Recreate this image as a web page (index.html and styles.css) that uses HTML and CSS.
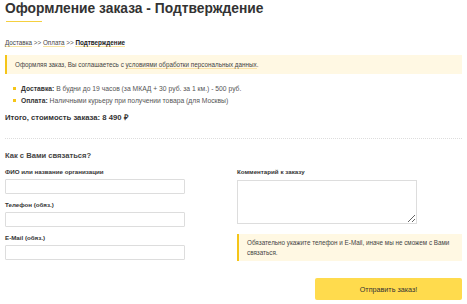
FILE: index.html
```html
<!DOCTYPE html>
<html lang="ru">
<head>
    <meta charset="UTF-8">
    <title>Оформление заказа - Подтверждение</title>
    <link rel="stylesheet" href="styles.css">
</head>
<body>

<div class="page">
    <h1 class="title">Оформление заказа - Подтверждение</h1>

    <div class="crumbs">
        <a href="#">Доставка</a> &gt;&gt; <a href="#">Оплата</a> &gt;&gt; <b>Подтверждение</b>
    </div>

    <div class="note">Оформляя заказ, Вы соглашаетесь с <span class="hl">условиями обработки персональных данных</span>.</div>

    <ul class="summary">
        <li><b>Доставка:</b> В будни до 19 часов (за МКАД + 30 руб. за 1 км.) - 500 руб.</li>
        <li><b>Оплата:</b> Наличными курьеру при получении товара (для Москвы)</li>
    </ul>

    <div class="total">Итого, стоимость заказа: 8 490 ₽</div>

    <div class="sep"></div>

    <h3 class="contact-title">Как с Вами связаться?</h3>

    <form class="contact" onsubmit="event.preventDefault()">
        <div class="col">
            <label>ФИО или название организации</label>
            <input type="text">
            <label>Телефон (обяз.)</label>
            <input type="text">
            <label>E-Mail (обяз.)</label>
            <input type="text">
        </div>
        <div class="col">
            <label>Комментарий к заказу</label>
            <textarea></textarea>
            <div class="note note-small">Обязательно укажите телефон и E-Mail, иначе мы не сможем с Вами связаться.</div>
            <div class="actions">
                <button type="submit">Отправить заказ!</button>
            </div>
        </div>
    </form>
</div>

</body>
</html>
```

FILE: styles.css
```css
body {
    font-family: "Liberation Sans", Arial, sans-serif;
    color: #333;
    margin: 0;
    background: #fff;
}
.page {
    padding: 0 5px;
}
.title {
    font-size: 13.8px;
    font-weight: bold;
    margin: 0;
    line-height: 17px;
    color: #333;
}
.title::after {
    content: "";
    display: block;
    width: 36px;
    height: 1px;
    background: #f5d040;
    margin: 4px 0 0 1px;
}
.crumbs {
    margin-top: 16px;
    font-size: 6.3px;
    color: #555;
    line-height: 9px;
}
.crumbs a {
    color: #444;
    text-decoration: none;
    border-bottom: 1px solid #f8e4a0;
}
.crumbs b {
    color: #222;
    border-bottom: 1px solid #f8e4a0;
}
.note {
    background: #fff8e3;
    border-left: 2px solid #f5c518;
    font-size: 6.3px;
    color: #444;
    padding: 5px 10px 5px 8px;
    margin-top: 8px;
    line-height: 9px;
}
.hl {
    border-bottom: 1px solid #fbe3a8;
}
.summary {
    list-style: none;
    margin: 9px 0 0 0;
    padding: 0 0 0 8px;
    font-size: 6.75px;
    line-height: 12px;
    color: #555;
}
.summary li::before {
    content: "";
    display: inline-block;
    width: 3px;
    height: 3px;
    background: #f5c518;
    margin: 0 5px 1px 0;
}
.summary b {
    color: #333;
}
.total {
    font-size: 7.7px;
    line-height: 10px;
    font-weight: bold;
    margin-top: 6px;
    color: #333;
}
.sep {
    border-top: 1px dotted #ddd;
    margin-top: 15px;
}
.contact-title {
    font-size: 7.6px;
    line-height: 10px;
    font-weight: bold;
    margin: 12px 0 0 0;
    color: #444;
}
.contact {
    display: grid;
    grid-template-columns: 232px 1fr;
    margin-top: 7px;
}
.col {
    display: flex;
    flex-direction: column;
}
.col label {
    font-size: 6.2px;
    font-weight: bold;
    color: #333;
    line-height: 8px;
}
.col input {
    width: 180px;
    height: 15px;
    box-sizing: border-box;
    border: 1px solid #ddd;
    border-radius: 1px;
    margin: 3px 0 7px 0;
    padding: 0;
}
.col textarea {
    width: 180px;
    height: 44px;
    box-sizing: border-box;
    border: 1px solid #ddd;
    margin: 4px 0 10px 0;
    resize: vertical;
}
.note-small {
    margin-top: 0;
    padding: 4px 10px 4px 8px;
    line-height: 9.5px;
}
.actions {
    display: flex;
    justify-content: flex-end;
    margin-top: 17px;
}
button {
    width: 147px;
    height: 22px;
    background: #ffdb4d;
    border: none;
    border-radius: 2px;
    font-family: inherit;
    font-size: 7.2px;
    color: #333;
}
```
